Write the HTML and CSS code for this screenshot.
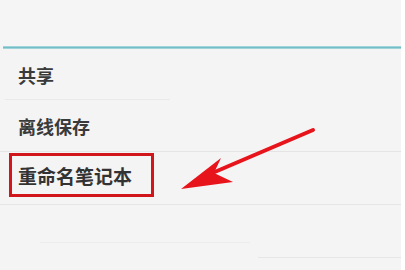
FILE: index.html
```html
<!DOCTYPE html>
<html lang="zh">
<head>
<meta charset="utf-8">
<link rel="stylesheet" href="styles.css">
</head>
<body>
<div class="panel">
  <div class="top"></div>
  <div class="accent"></div>
  <ul class="menu">
    <li class="item item-first"><span class="label">共享</span></li>
    <li class="item item-second"><span class="label">离线保存</span></li>
    <li class="item item-third"><span class="label highlight">重命名笔记本</span></li>
  </ul>
  <div class="rest">
    <div class="faint faint-a"></div>
    <div class="faint faint-b"></div>
  </div>
  <svg class="arrow" width="405" height="270" viewBox="0 0 405 270">
    <line x1="313" y1="130" x2="210" y2="174" stroke="#e8141c" stroke-width="4" stroke-linecap="round"/>
    <polygon points="181,189 221,158 214,173 233,182" fill="#e8141c"/>
  </svg>
</div>
</body>
</html>
```
FILE: styles.css
```css
html, body {
  margin: 0;
  padding: 0;
  background: #ffffff;
}
.panel {
  position: relative;
  width: 401px;
  height: 270px;
  background: #f4f4f4;
  overflow: hidden;
  font-family: "Noto Sans CJK SC", "Noto Sans", sans-serif;
}
.top {
  height: 46px;
  background: #f5f5f5;
}
.accent {
  height: 3px;
  margin-left: 3px;
  background: linear-gradient(#b5e0e5, #74bcc6, #b5e0e5);
}
.menu {
  list-style: none;
  margin: 0;
  padding: 0;
}
.item {
  display: flex;
  align-items: center;
  padding-left: 18px;
  color: #3a3a3a;
  font-size: 18px;
  font-weight: 700;
  line-height: 1;
  box-sizing: border-box;
}
.item-first {
  height: 51px;
  position: relative;
}
.item-first::after {
  content: "";
  position: absolute;
  left: 5px;
  bottom: 0;
  width: 165px;
  height: 1px;
  background: #e9e9e9;
}
.item-second {
  height: 52px;
  border-bottom: 1px solid #e4e4e4;
}
.item-third {
  height: 53px;
  padding-left: 9px;
  padding-top: 1px;
  align-items: flex-start;
  border-bottom: 1px solid #e6e6e6;
}
.highlight {
  display: inline-flex;
  align-items: center;
  height: 44px;
  padding: 0 19px 0 6px;
  border: 3px solid #d0151b;
  box-sizing: border-box;
  font-size: 19px;
  color: #333333;
}
.rest {
  display: flex;
  flex-direction: column;
  gap: 14px;
  padding-top: 37px;
}
.faint {
  height: 1px;
  background: #ececec;
}
.faint-a {
  margin-left: 40px;
  width: 210px;
}
.faint-b {
  margin-left: 258px;
  width: 143px;
  background: #e6e6e6;
}
.arrow {
  position: absolute;
  left: 0;
  top: 0;
  pointer-events: none;
}
```
